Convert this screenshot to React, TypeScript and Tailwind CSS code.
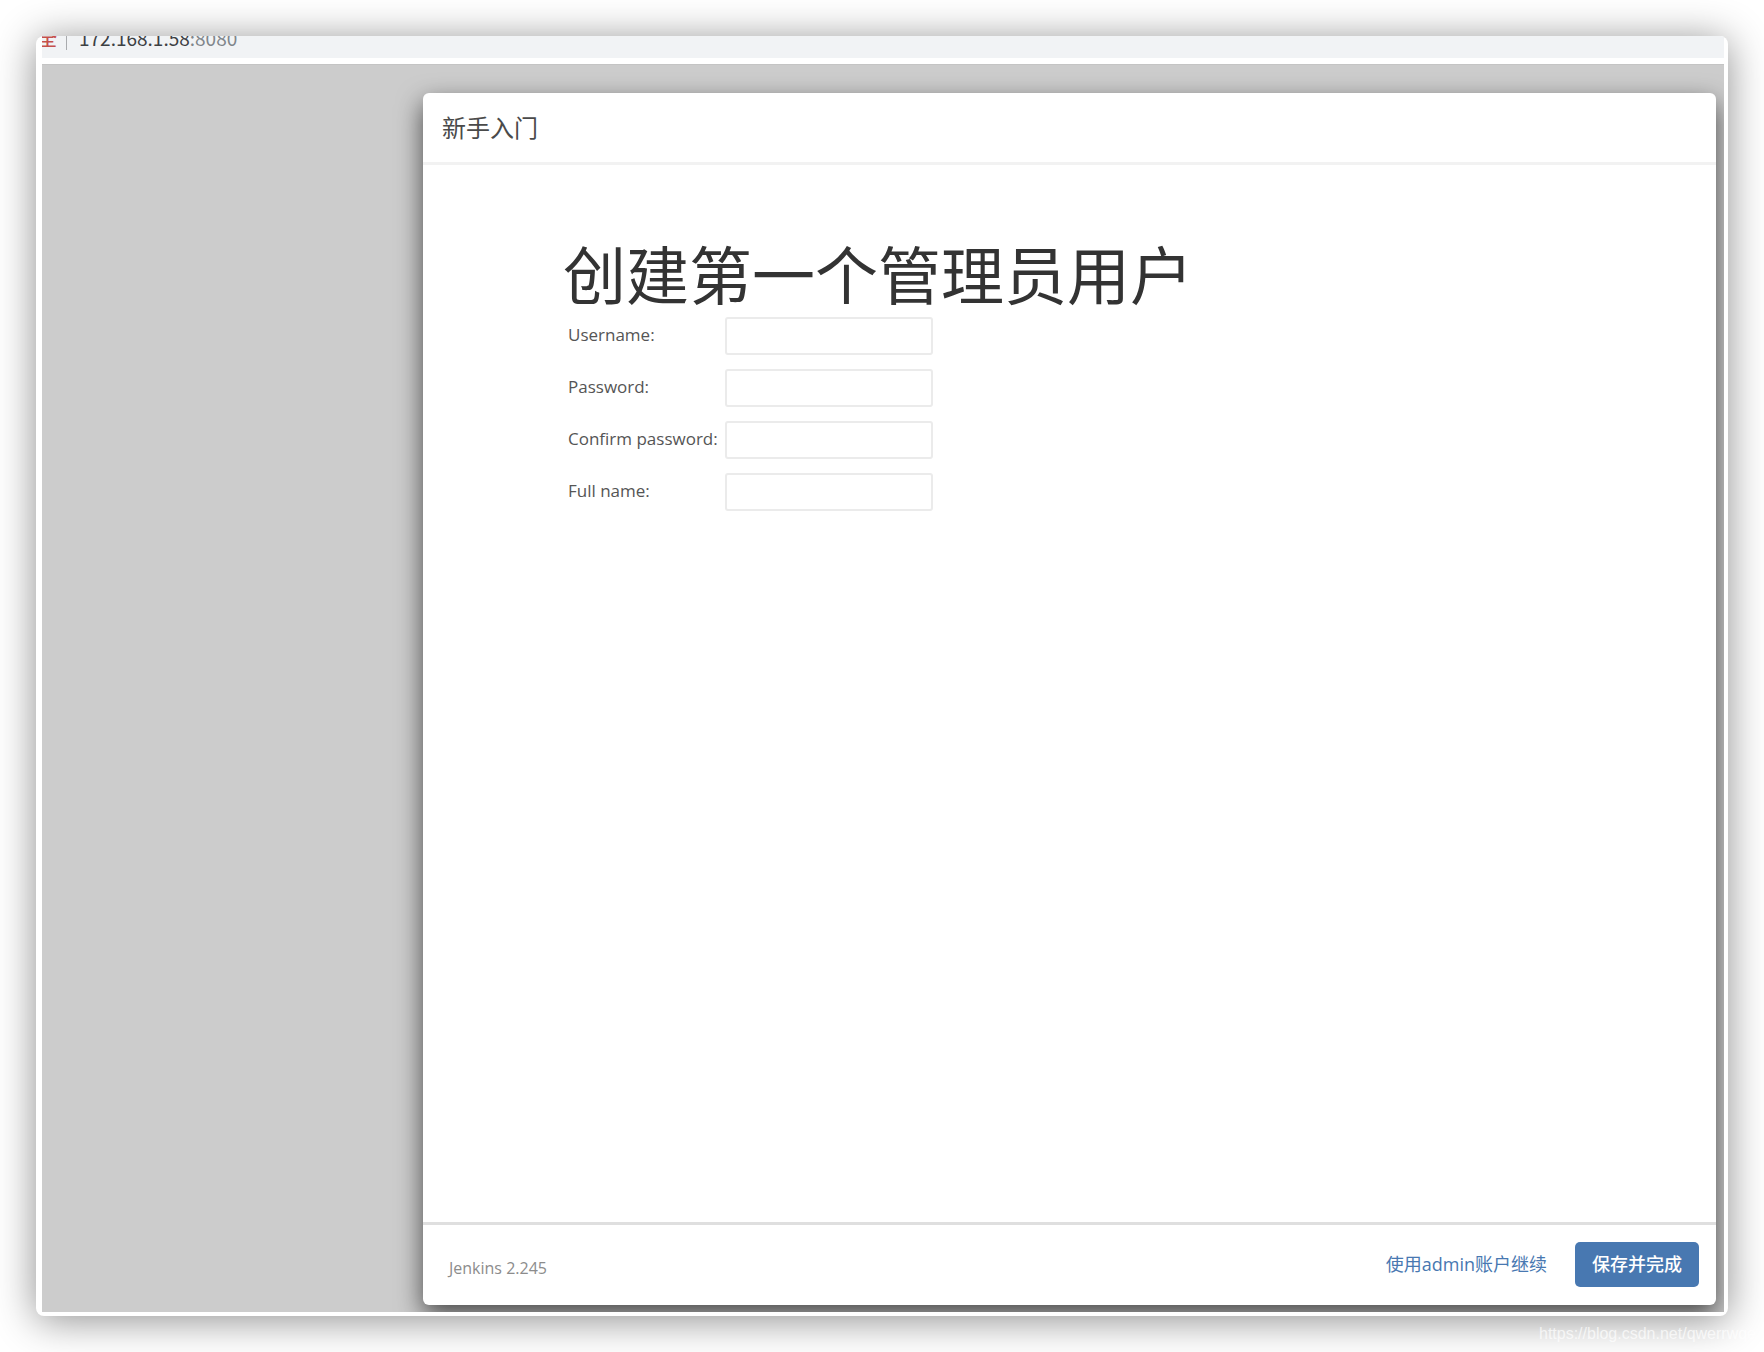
import { useId } from 'react'

const FIELDS = [
  { name: 'username', label: 'Username:', type: 'text' },
  { name: 'password1', label: 'Password:', type: 'password' },
  { name: 'password2', label: 'Confirm password:', type: 'password' },
  { name: 'fullname', label: 'Full name:', type: 'text' },
]

function AddressBar() {
  return (
    <div className="h-[22px] shrink-0 overflow-hidden bg-[#f1f3f5] font-['Noto_Sans_CJK_SC',sans-serif] text-[19px]">
      <div className="-mt-2.5 -ml-1 flex items-center leading-6">
        <span className="font-medium text-[#c5504c]">全</span>
        <span className="ml-[9px] h-6 w-px bg-[#a9abae]" />
        <span className="ml-3 text-[#3c4043]">
          172.168.1.58<span className="text-[#80868b]">:8080</span>
        </span>
      </div>
    </div>
  )
}

function Field({ name, label, type }: { name: string; label: string; type: string }) {
  const id = useId()
  return (
    <tr>
      <td className="pr-[7px] pb-[14px] align-top">
        <label htmlFor={id} className="block pt-1.5 leading-6">
          {label}
        </label>
      </td>
      <td className="pb-[14px] align-top">
        <input
          id={id}
          name={name}
          type={type}
          className="block h-[38px] w-52 rounded-[3px] border-2 border-[#ebebeb] bg-white px-2 outline-none focus:border-[#4878b1]"
        />
      </td>
    </tr>
  )
}

function SetupDialog() {
  return (
    <form className="flex flex-1 flex-col rounded-md bg-white shadow-[0_10px_26px_rgba(0,0,0,0.65)]">
      <header className="flex h-[72px] shrink-0 items-center border-b-3 border-[#f2f2f2] px-[19px] text-2xl text-[#4a4a4a]">
        新手入门
      </header>

      <main className="flex-1 pt-[70px] pl-[140px]">
        <h1 className="pb-0.5 text-[63px] leading-[80px] text-[#333]">创建第一个管理员用户</h1>
        <table className="ml-[5px] border-collapse text-[17px] text-[#555]">
          <tbody>
            {FIELDS.map((field) => (
              <Field key={field.name} {...field} />
            ))}
          </tbody>
        </table>
      </main>

      <footer className="flex h-[83px] shrink-0 items-center border-t-3 border-[#dfdfdf] pr-[17px] pb-0.5 pl-[26px]">
        <span className="pt-2 text-base text-[#8c8c8c]">Jenkins 2.245</span>
        <a href="#admin" className="ml-auto text-lg text-[#4878b1]">
          使用admin账户继续
        </a>
        <button type="submit" className="ml-7 h-[45px] rounded-[5px] bg-[#4878b1] px-[17px] text-lg font-medium text-white">
          保存并完成
        </button>
      </footer>
    </form>
  )
}

export default function App() {
  return (
    <div className="relative min-h-screen overflow-hidden bg-white p-9 font-['Open_Sans','Noto_Sans_CJK_SC',sans-serif]">
      <div className="flex min-h-[calc(100vh-72px)] flex-col overflow-hidden rounded-lg bg-white pr-1 pb-1 pl-1.5 shadow-[0_4px_40px_rgba(0,0,0,0.45)]">
        <AddressBar />
        <div className="mt-1.5 flex flex-1 overflow-hidden border-t border-[#c4c4c4] bg-[#ccc] pt-7 pr-2 pb-[7px] pl-[381px]">
          <SetupDialog />
        </div>
      </div>
      <span className="absolute right-2 bottom-1.5 font-['Liberation_Sans',sans-serif] text-base text-white/70">
        https://blog.csdn.net/qwerrwqe
      </span>
    </div>
  )
}
